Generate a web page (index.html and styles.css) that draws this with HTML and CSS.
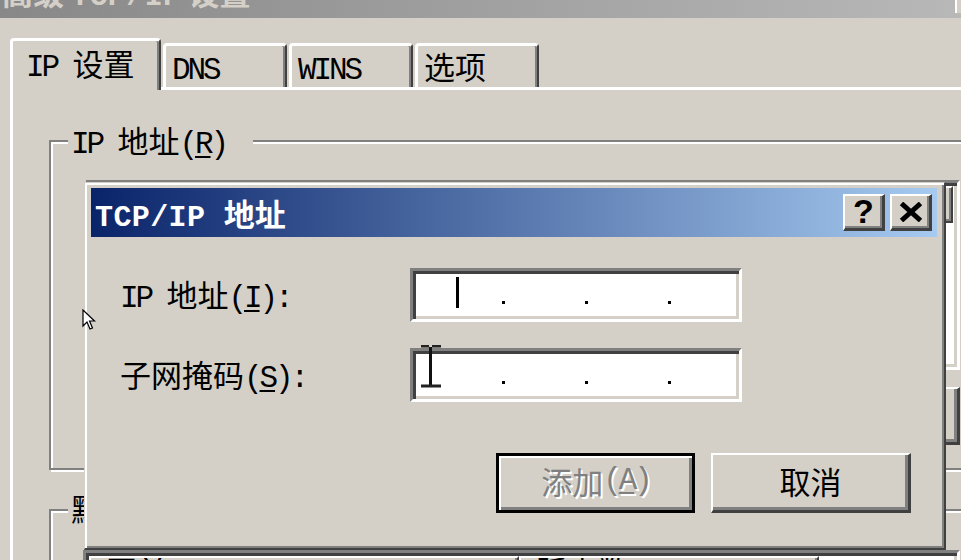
FILE: index.html
```html
<!DOCTYPE html>
<html lang="zh-CN">
<head>
<meta charset="utf-8">
<title>TCP/IP 地址</title>
<link rel="stylesheet" href="styles.css">
</head>
<body>
<div class="screen">
  <div class="caption">
    <div class="caption-text">高级 <span class="a">TCP/IP</span> 设置</div>
    <div class="caption-btn"></div>
  </div>

  <div class="sheet">
    <div class="tabs">
      <div class="tab active"><span class="a">IP </span>设置</div>
      <div class="tab"><span class="a">DNS</span></div>
      <div class="tab"><span class="a">WINS</span></div>
      <div class="tab">选项</div>
    </div>
    <div class="panel">
      <div class="group g1">
        <div class="glabel"><span class="a">IP </span>地址<span class="a">(<u>R</u>)</span></div>
        <div class="list list1">
          <div class="lhead">
            <div class="hcell h1"><span class="a">IP </span>地址</div>
            <div class="hcell h2">子网掩码</div>
          </div>
        </div>
        <div class="btnrow">
          <div class="pbtn">添加<span class="a">(<u>A</u>)...</span></div>
          <div class="pbtn">编辑<span class="a">(<u>T</u>)...</span></div>
          <div class="pbtn">删除<span class="a">(<u>V</u>)</span></div>
        </div>
      </div>
      <div class="group g2">
        <div class="glabel">默认网关<span class="a">(<u>F</u>):</span></div>
        <div class="list list2">
          <div class="lhead">
            <div class="hcell h1">网关</div>
            <div class="hcell h2">跃点数</div>
          </div>
        </div>
      </div>
    </div>
  </div>

  <div class="dialog">
    <div class="titlebar">
      <div class="title"><span class="a">TCP/IP </span>地址</div>
      <div class="tbtn help">?</div>
      <div class="tbtn close">
        <svg width="24" height="20" viewBox="0 0 24 20"><path d="M2.5 1.5 L21.5 18.5 M21.5 1.5 L2.5 18.5" stroke="#000" stroke-width="5"/></svg>
      </div>
    </div>
    <div class="dbody">
      <div class="frow">
        <div class="flabel"><span class="a">IP </span>地址<span class="a">(<u>I</u>):</span></div>
        <div class="ipbox">
          <div class="oct"><span class="caret"></span></div>
          <span class="dot"></span>
          <div class="oct"></div>
          <span class="dot"></span>
          <div class="oct"></div>
          <span class="dot"></span>
          <div class="oct last"></div>
        </div>
      </div>
      <div class="frow">
        <div class="flabel">子网掩码<span class="a">(<u>S</u>):</span></div>
        <div class="ipbox">
          <div class="oct"></div>
          <span class="dot"></span>
          <div class="oct"></div>
          <span class="dot"></span>
          <div class="oct"></div>
          <span class="dot"></span>
          <div class="oct last"></div>
        </div>
      </div>
      <div class="dbtns">
        <div class="btn default">添加<span class="a">(<u>A</u>)</span></div>
        <div class="btn">取消</div>
      </div>
    </div>
  </div>

  <svg class="cur cur-arrow" width="14" height="22" viewBox="0 0 14 22"><path d="M1 1 L1 17 L5 13 L8 20 L10.5 19 L7.5 12 L12.5 12 Z" fill="#fff" stroke="#000" stroke-width="1.2"/></svg>
  <svg class="cur cur-ibeam" width="20" height="43" viewBox="0 0 20 43"><rect x="0" y="0" width="8" height="2.5" fill="#222"/><rect x="11" y="0" width="9" height="2.5" fill="#222"/><rect x="8" y="2" width="3" height="38" fill="#111"/><rect x="0" y="39.5" width="20" height="3" fill="#222"/></svg>
</div>
</body>
</html>
```

FILE: styles.css
```css
* { box-sizing: border-box; }
html, body { margin: 0; padding: 0; }
body { background: #d4d0c8; }

.screen {
  position: relative;
  width: 961px;
  height: 560px;
  overflow: hidden;
  background: #d4d0c8;
  color: #000;
  font-family: "Noto Sans CJK SC", "Noto Sans CJK JP", sans-serif;
  font-size: 31px;
  line-height: 31px;
}

.a {
  font-family: "Liberation Mono", "DejaVu Sans Mono", monospace;
  font-size: 31px;
  letter-spacing: -3.1px;
  line-height: 18px;
}

u {
  text-decoration-thickness: 2px;
  text-underline-offset: 3px;
}

/* top (inactive) caption of the parent window */
.caption {
  display: flex;
  height: 18px;
  overflow: hidden;
  background: linear-gradient(90deg, #888888 0%, #a0a0a0 50%, #b8b8b8 100%);
}
.caption-text {
  flex: 1;
  margin-top: -24px;
  padding-left: 2px;
  color: #d4d0c8;
  font-weight: bold;
  white-space: nowrap;
}
.caption-text .a,
.title .a {
  font-size: 30px;
  letter-spacing: 0.4px;
  font-weight: bold;
}
.caption-btn {
  width: 6px;
  height: 13px;
  border-left: 2px solid #fff;
  background: #d4d0c8;
}

/* property sheet */
.sheet { padding: 20px 0 0 10px; }
.tabs {
  display: flex;
  align-items: flex-end;
  height: 49px;
}
.tab {
  position: relative;
  width: 124px;
  height: 44px;
  margin-left: 2px;
  padding: 4px 0 0 6px;
  background: #d4d0c8;
  border-top: 3px solid #fff;
  border-left: 3px solid #fff;
  border-right: 2px solid #404040;
  border-radius: 4px 4px 0 0;
  box-shadow: inset -2px 0 0 #808080;
  white-space: nowrap;
}
.tab.active {
  z-index: 1;
  width: 151px;
  height: 52px;
  margin: 0 0 -3px 0;
  padding: 6px 0 0 13px;
}

.panel {
  width: 1000px;
  height: 480px;
  border-top: 3px solid #fff;
  border-left: 3px solid #fff;
  padding: 50px 0 0 36px;
}

.group {
  width: 960px;
  border: 2px solid #808080;
  box-shadow: inset 2px 2px 0 #fff, 2px 2px 0 #fff;
}
.g1 { height: 330px; }
.g2 { height: 200px; margin-top: 39px; }

.glabel {
  width: max-content;
  margin: -18px 0 0 17px;
  padding: 0 27px 0 3px;
  background: #d4d0c8;
  white-space: nowrap;
}
.g2 .glabel { margin-top: -19px; }

.list {
  background: #fff;
  border: 3px solid;
  border-color: #808080 #fff #fff #808080;
  box-shadow: inset 3px 3px 0 #404040, inset -3px -3px 0 #d4d0c8;
  padding: 3px;
}
.list1 { width: 874px; height: 190px; margin: 25px 0 0 35px; }
.list2 { width: 877px; height: 120px; margin: 27px 0 0 32px; }

.lhead { display: flex; height: 37px; }
.hcell {
  background: #d4d0c8;
  border: 2px solid;
  border-color: #fff #404040 #404040 #fff;
  box-shadow: inset -2px -2px 0 #808080;
  padding: 0 0 0 15px;
  white-space: nowrap;
  overflow: hidden;
}
.list1 .h1 { width: 428px; }
.list1 .h2 { width: 433px; }
.list2 .hcell { line-height: 24px; }
.list2 .h1 { width: 430px; }
.list2 .h2 { width: 300px; }

.btnrow {
  display: flex;
  justify-content: flex-end;
  gap: 16px;
  width: 909px;
  margin-top: 17px;
}
.pbtn {
  width: 200px;
  height: 58px;
  display: flex;
  align-items: center;
  justify-content: center;
  background: #d4d0c8;
  border-style: solid;
  border-width: 2px 3px 3px 2px;
  border-color: #fff #404040 #404040 #fff;
  box-shadow: inset -3px -3px 0 #808080;
  white-space: nowrap;
}

/* TCP/IP address dialog */
.dialog {
  position: absolute;
  left: 84px;
  top: 182px;
  width: 862px;
  height: 368px;
  background: #d4d0c8;
  border-style: solid;
  border-width: 1px 2px 2px 1px;
  border-color: #d4d0c8 #404040 #404040 #d4d0c8;
  box-shadow: inset 2px 2px 0 #fff, inset -2px -2px 0 #808080;
  padding: 5px 7px 0 6px;
}
.titlebar {
  display: flex;
  align-items: center;
  height: 49px;
  padding: 0 5px 0 4px;
  background: linear-gradient(90deg, #0a246a 0%, #a6caf0 100%);
  color: #fff;
  font-weight: bold;
}
.title { flex: 1; white-space: nowrap; }
.tbtn {
  width: 42px;
  height: 37px;
  margin-left: 5px;
  display: flex;
  align-items: center;
  justify-content: center;
  background: #d4d0c8;
  border-style: solid;
  border-width: 2px 3px 3px 2px;
  border-color: #fff #404040 #404040 #fff;
  box-shadow: inset -2px -2px 0 #808080;
  color: #000;
}
.help {
  font-family: "Liberation Sans", sans-serif;
  font-size: 34px;
  line-height: 30px;
  font-weight: bold;
  padding-bottom: 3px;
}
.close svg { display: block; }

.dbody { padding: 31px 26px 0 29px; }
.frow { display: flex; align-items: center; }
.frow + .frow { margin-top: 26px; }
.flabel {
  width: 290px;
  padding-bottom: 4px;
  white-space: nowrap;
}
.ipbox {
  display: flex;
  align-items: flex-start;
  width: 332px;
  height: 54px;
  padding: 3px 3px 3px 9px;
  background: #fff;
  border: 3px solid;
  border-color: #808080 #fff #fff #808080;
  box-shadow: inset 3px 3px 0 #404040, inset -3px -3px 0 #d4d0c8;
}
.oct { width: 80px; height: 42px; }
.oct.last { flex: 1; }
.dot {
  width: 3px;
  height: 3px;
  margin-top: 27px;
  background: #000;
}
.caret {
  display: block;
  width: 3px;
  height: 31px;
  margin: 3px 0 0 34px;
  background: #000;
}

.dbtns {
  display: flex;
  justify-content: flex-end;
  gap: 16px;
  margin-top: 51px;
}
.btn {
  width: 200px;
  height: 60px;
  display: flex;
  align-items: center;
  justify-content: center;
  padding-bottom: 5px;
  background: #d4d0c8;
  border-style: solid;
  border-width: 2px 3px 3px 2px;
  border-color: #fff #404040 #404040 #fff;
  box-shadow: inset -3px -3px 0 #808080;
  white-space: nowrap;
}
.btn.default {
  width: 199px;
  border: 3px solid #000;
  box-shadow: inset 2px 2px 0 #fff, inset -3px -3px 0 #808080;
  color: #808080;
  text-shadow: 2px 2px 0 #fff;
}

/* mouse cursors drawn over the screen */
.cur { position: absolute; }
.cur-arrow { left: 82px; top: 309px; }
.cur-ibeam { left: 421px; top: 345px; }
```
